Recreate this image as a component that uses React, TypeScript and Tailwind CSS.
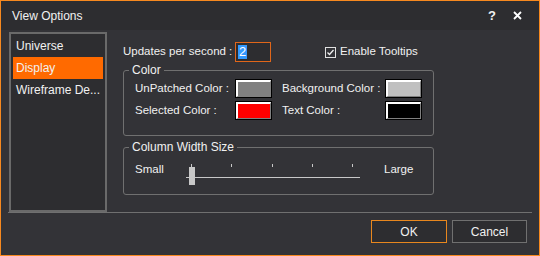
import React from 'react';

const font = { fontFamily: '"Liberation Sans", Arial, sans-serif' };

const Swatch: React.FC<{ color: string }> = ({ color }) => (
  <div className="w-[37px] h-[19px] border border-black bg-[#808080]">
    <div className="w-full h-full border-t-2 border-l-2 border-t-white border-l-white border-b border-r border-b-[#808080] border-r-[#808080]">
      <div className="w-full h-full" style={{ backgroundColor: color }} />
    </div>
  </div>
);

const Group: React.FC<{ title: string; className?: string; children: React.ReactNode }> = ({ title, className, children }) => (
  <div className={`relative border border-[#707070] rounded-[3px] ${className ?? ''}`}>
    <span className="absolute -top-[8px] left-[5px] px-[3px] bg-[#333337] leading-[14px] text-[12px]">{title}</span>
    {children}
  </div>
);

export default function App() {
  const ticks = [0, 1, 2, 3, 4];
  return (
    <div
      className="w-[540px] h-[256px] border border-[#f7891f] bg-[#333337] text-[11.5px] text-[#f1f1f1] flex flex-col overflow-hidden whitespace-nowrap"
      style={font}
    >
      {/* title bar */}
      <div className="h-[29px] bg-[#2d2d30] flex items-center pl-[11px] pr-[17px] shrink-0">
        <span className="text-[12px] pt-[1px]">View Options</span>
        <span className="ml-auto font-bold text-[13px]">?</span>
        <svg className="ml-[17px]" width="9" height="9" viewBox="0 0 9 9" stroke="white" strokeWidth="1.8">
          <path d="M1 1L8 8M8 1L1 8" />
        </svg>
      </div>

      {/* body */}
      <div className="flex flex-1 pl-[8px] pt-[2px]">
        <div className="w-[98px] h-[180px] border-2 border-[#6a6a6a] bg-[#2d2d30] pt-[1px] px-[2px] shrink-0 text-[12px]">
          <div className="h-[22px] pl-[3px] flex items-center">Universe</div>
          <div className="h-[22px] pl-[3px] flex items-center bg-[#ff6a00]">Display</div>
          <div className="h-[22px] pl-[3px] flex items-center">Wireframe De...</div>
        </div>

        <div className="flex flex-col pl-[16px] pt-[10px]">
          <div className="flex items-center h-[20px]">
            <span className="w-[112px]">Updates per second :</span>
            <div className="w-[36px] h-[20px] border border-[#e0661a] bg-[#2d2d30] flex items-center pl-[2px]">
              <span className="bg-[#3399ff] text-white px-[1px] leading-[14px] text-[13px]">2</span>
            </div>
            <label className="flex items-center ml-[54px] gap-[4px]">
              <span className="w-[11px] h-[11px] border border-[#e0e0e0] flex items-center justify-center">
                <svg width="9" height="9" viewBox="0 0 9 9" fill="none" stroke="#f1f1f1" strokeWidth="1.3">
                  <path d="M1.5 4.5L3.5 6.5L7.5 2" />
                </svg>
              </span>
              Enable Tooltips
            </label>
          </div>

          <Group title="Color" className="w-[311px] h-[66px] mt-[8px]">
            <div className="grid grid-cols-[100px_47px_103px_37px] items-center pl-[11px] pt-[8px] gap-y-[3px]">
              <span>UnPatched Color :</span>
              <Swatch color="#808080" />
              <span>Background Color :</span>
              <Swatch color="#c0c0c0" />
              <span>Selected Color :</span>
              <Swatch color="#ff0000" />
              <span>Text Color :</span>
              <Swatch color="#000000" />
            </div>
          </Group>

          <Group title="Column Width Size" className="w-[311px] h-[48px] mt-[11px]">
            <div className="flex items-start pl-[11px] pt-[9px]">
              <span className="w-[51px] pt-[4px]">Small</span>
              <div className="relative w-[174px] h-[28px]">
                <div className="flex justify-between pl-[5px] pr-[7px] pt-[7px]">
                  {ticks.map((t) => (
                    <span key={t} className="w-[1px] h-[3px] bg-[#c8c8c8]" />
                  ))}
                </div>
                <div className="h-[1px] bg-[#c8c8c8] mt-[10px]" />
                <div className="absolute left-[3px] top-[10px] w-[6px] h-[18px] bg-[#c8c8c8]" />
              </div>
              <span className="ml-[24px] pt-[4px]">Large</span>
            </div>
          </Group>
        </div>
      </div>

      {/* footer */}
      <div className="mx-[7px] border-t border-[#707070] h-[43px] flex items-start justify-end pt-[7px] pr-[5px] gap-[5px] shrink-0 text-[12px]">
        <button className="w-[76px] h-[23px] border border-[#e8871e] bg-[#2d2d30]">OK</button>
        <button className="w-[75px] h-[23px] border border-[#707070] bg-[#2d2d30]">Cancel</button>
      </div>
    </div>
  );
}
